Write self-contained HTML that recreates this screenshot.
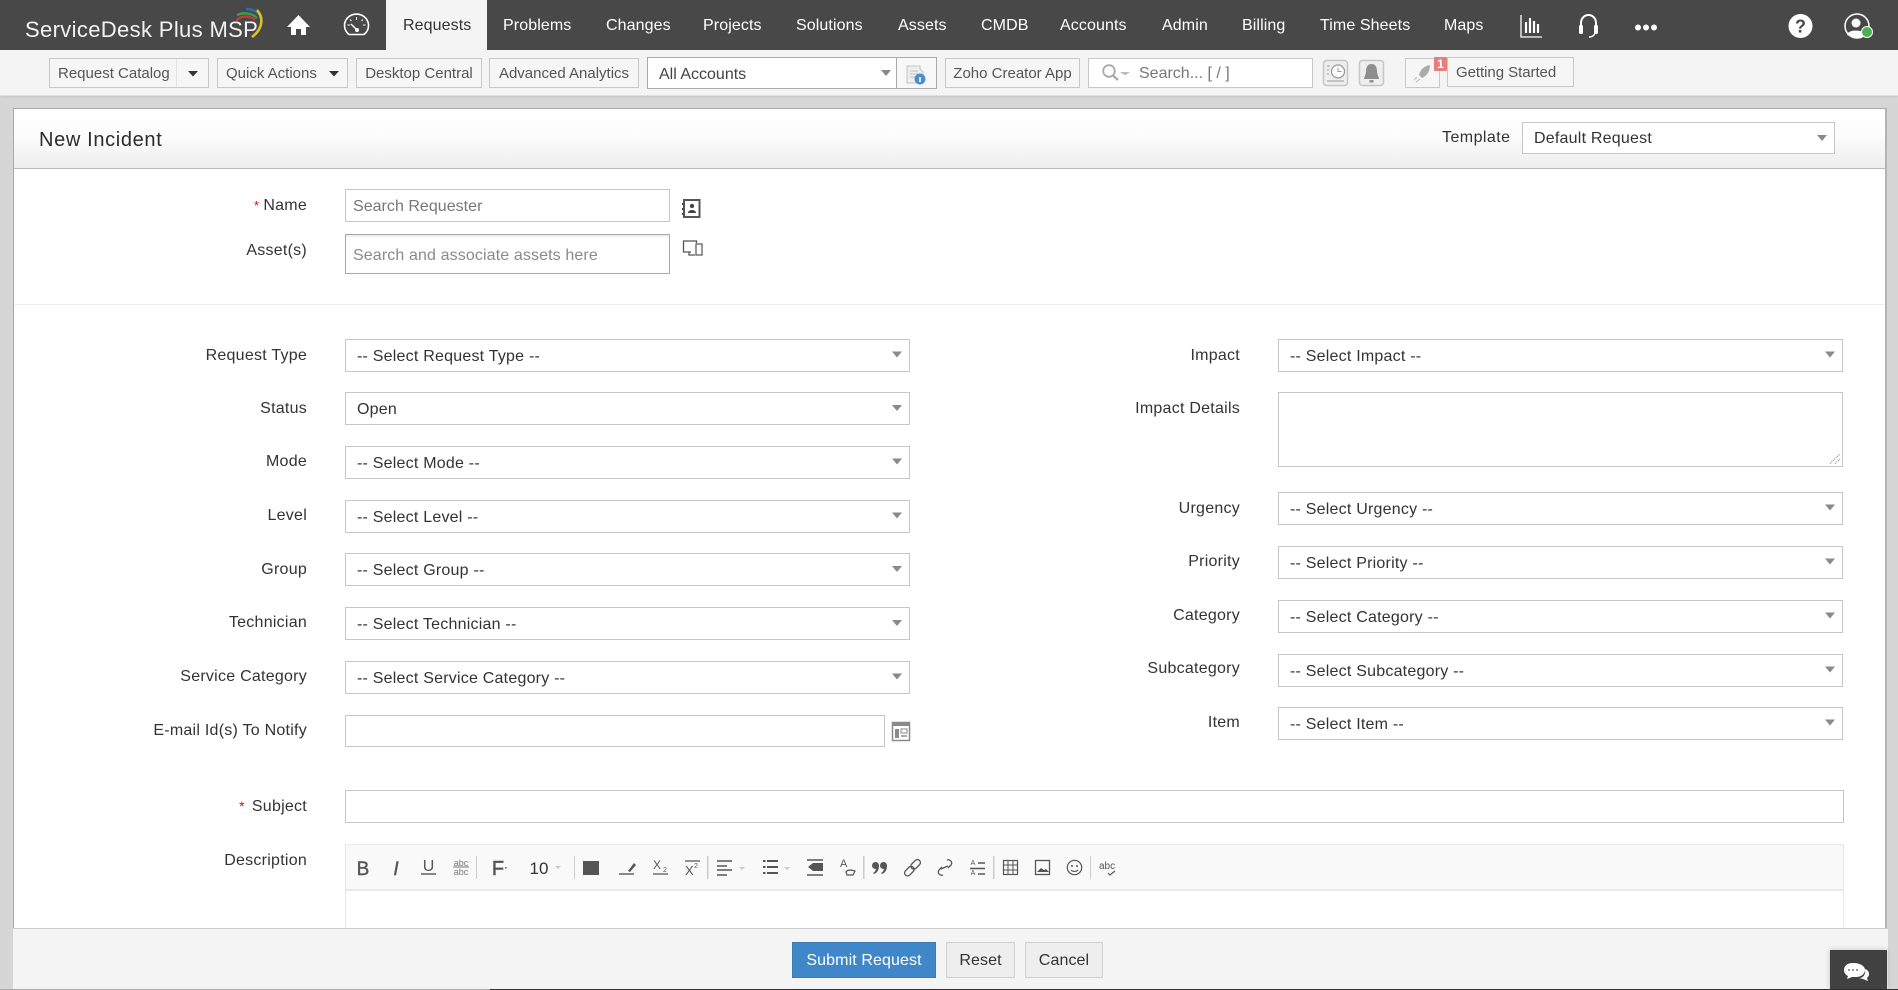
<!DOCTYPE html>
<html lang="en">
<head>
<meta charset="utf-8">
<title>New Incident</title>
<style>
html,body{margin:0;padding:0;width:1898px;height:990px;overflow:hidden;background:#d6d6d6;font-family:"Liberation Sans",Arial,sans-serif;color:#333}
div,span{position:absolute;box-sizing:border-box;white-space:nowrap}
.n{top:15px;height:22px;line-height:22px;font-size:16px;color:#fff;letter-spacing:.1px}
.b{top:58px;height:30px;border:1px solid #c8c8c8;background:#f6f6f6;color:#555;font-size:15px;line-height:30px;text-align:center}
.l{height:20px;line-height:20px;font-size:16px;color:#333;text-align:right;margin-top:1px;letter-spacing:.25px}
.L{right:1591px}
.R{right:658px}
.s{height:33px;border:1px solid #c6c6c6;background:#fff;font-size:16px;line-height:33px;padding-left:11px;color:#333;letter-spacing:.22px}
.sl{left:345px;width:565px}
.sr{left:1278px;width:565px}
.btn{top:942px;height:36px;border:1px solid #cfcfcf;background:#eee;color:#333;font-size:16px;line-height:36px;text-align:center;letter-spacing:.1px}
</style>
</head>
<body>
<!-- top bar -->
<div style="left:0;top:0;width:1898px;height:50px;background:#484848"></div>
<div style="left:386px;top:0;width:101px;height:50px;background:#f4f4f4"></div>
<div style="left:25px;top:17px;height:26px;line-height:26px;font-size:22px;letter-spacing:.35px;color:#f2f2f2">ServiceDesk Plus MSP</div>
<div class="n" style="left:403px;color:#333">Requests</div>
<div class="n" style="left:503px">Problems</div>
<div class="n" style="left:606px">Changes</div>
<div class="n" style="left:703px">Projects</div>
<div class="n" style="left:796px">Solutions</div>
<div class="n" style="left:898px">Assets</div>
<div class="n" style="left:981px">CMDB</div>
<div class="n" style="left:1060px">Accounts</div>
<div class="n" style="left:1162px">Admin</div>
<div class="n" style="left:1242px">Billing</div>
<div class="n" style="left:1320px">Time Sheets</div>
<div class="n" style="left:1444px">Maps</div>

<!-- sub bar -->
<div style="left:0;top:50px;width:1898px;height:46px;background:#f4f4f4;border-bottom:1px solid #e2e2e2;box-shadow:0 1px 2px rgba(0,0,0,.08)"></div>
<div class="b" style="left:49px;width:160px;text-align:left;padding-left:8px">Request Catalog</div>
<div style="left:176px;top:59px;width:1px;height:28px;background:#e2e2e2"></div>
<div class="b" style="left:217px;width:131px;text-align:left;padding-left:8px">Quick Actions</div>
<div class="b" style="left:356px;width:126px">Desktop Central</div>
<div class="b" style="left:489px;width:150px">Advanced Analytics</div>
<div style="left:647px;top:57px;width:250px;height:32px;border:1px solid #aaa;background:#fff;font-size:16px;line-height:33px;padding-left:11px;color:#444">All Accounts</div>
<div style="left:896px;top:57px;width:41px;height:32px;border:1px solid #aaa;background:#f8f8f8"></div>
<div class="b" style="left:945px;width:135px">Zoho Creator App</div>
<div class="b" style="left:1088px;width:225px;background:#fff;text-align:left;padding-left:50px;color:#777;font-size:16px">Search... [ / ]</div>
<div style="left:1405px;top:58px;width:35px;height:30px;border:1px solid #c8c8c8;background:#f6f6f6"></div>
<div class="b" style="left:1447px;top:57px;width:127px;color:#555;text-align:left;padding-left:8px;letter-spacing:-.05px">Getting Started</div>
<div style="left:1434px;top:57px;width:13px;height:14px;background:#e57f7f;color:#fff;font-size:12px;font-weight:bold;line-height:14px;text-align:center;border-radius:1px">1</div>

<!-- panel -->
<div style="left:13px;top:108px;width:1874px;height:830px;background:#fff;border:1px solid #aaa;border-bottom:0;border-right:2px solid #b4b4b4"></div>
<div style="left:14px;top:109px;width:1871px;height:60px;background:linear-gradient(#fff 0,#fcfcfc 45%,#eeeeee 100%);border-bottom:1px solid #bbb"></div>
<div style="left:39px;top:127px;height:26px;line-height:26px;font-size:20px;letter-spacing:.65px;color:#2c2c2c">New Incident</div>
<div class="l" style="left:1442px;top:127px;letter-spacing:.45px">Template</div>
<div class="s" style="left:1522px;top:122px;width:313px;height:32px;line-height:32px;color:#333">Default Request</div>

<!-- requester -->
<div class="l L" style="top:195px"><span style="position:static;color:#e00;font-size:13px;margin-right:4px">*</span>Name</div>
<div class="l L" style="top:240px">Asset(s)</div>
<div class="s" style="left:345px;top:189px;width:325px;color:#777;padding-left:7px;letter-spacing:.03px">Search Requester</div>
<div class="s" style="left:345px;top:234px;width:325px;height:40px;border-color:#a8a8a8;line-height:41px;color:#8a8a8a;padding-left:7px;letter-spacing:.12px;box-shadow:inset 0 3px 3px -2px rgba(0,0,0,.12)">Search and associate assets here</div>
<div style="left:14px;top:304px;width:1871px;height:1px;background:#ececec"></div>

<!-- left col -->
<div class="l L" style="top:345px">Request Type</div>
<div class="l L" style="top:398px">Status</div>
<div class="l L" style="top:451px">Mode</div>
<div class="l L" style="top:505px">Level</div>
<div class="l L" style="top:559px">Group</div>
<div class="l L" style="top:612px">Technician</div>
<div class="l L" style="top:666px">Service Category</div>
<div class="l L" style="top:720px">E-mail Id(s) To Notify</div>
<div class="l L" style="top:795px"><span style="position:static;color:#e00;font-size:14px;margin-right:7px">*</span>Subject</div>
<div class="l L" style="top:850px">Description</div>

<div class="s sl" style="top:339px">-- Select Request Type --</div>
<div class="s sl" style="top:392px">Open</div>
<div class="s sl" style="top:446px">-- Select Mode --</div>
<div class="s sl" style="top:500px">-- Select Level --</div>
<div class="s sl" style="top:553px">-- Select Group --</div>
<div class="s sl" style="top:607px">-- Select Technician --</div>
<div class="s sl" style="top:661px">-- Select Service Category --</div>
<div class="s" style="left:345px;top:715px;width:540px;height:32px"></div>
<div class="s" style="left:345px;top:790px;width:1499px"></div>

<!-- right col -->
<div class="l R" style="top:345px">Impact</div>
<div class="l R" style="top:398px">Impact Details</div>
<div class="l R" style="top:498px">Urgency</div>
<div class="l R" style="top:551px">Priority</div>
<div class="l R" style="top:605px">Category</div>
<div class="l R" style="top:658px">Subcategory</div>
<div class="l R" style="top:712px">Item</div>

<div class="s sr" style="top:339px">-- Select Impact --</div>
<div class="s sr" style="top:392px;height:75px"></div>
<div class="s sr" style="top:492px">-- Select Urgency --</div>
<div class="s sr" style="top:546px">-- Select Priority --</div>
<div class="s sr" style="top:600px">-- Select Category --</div>
<div class="s sr" style="top:654px">-- Select Subcategory --</div>
<div class="s sr" style="top:707px">-- Select Item --</div>

<!-- editor -->
<div style="left:345px;top:844px;width:1499px;height:46px;background:#f9f9f9;border:1px solid #e8e8e8"></div>
<div style="left:345px;top:890px;width:1499px;height:40px;background:#fff;border:1px solid #e8e8e8;border-bottom:0"></div>

<!-- footer -->
<div style="left:13px;top:928px;width:1875px;height:61px;background:#f4f4f4;border-top:1px solid #ccc"></div>
<div style="left:0;top:989px;width:490px;height:1px;background:#aaa"></div>
<div style="left:490px;top:989px;width:1408px;height:1px;background:#333"></div>
<div class="btn" style="left:792px;width:144px;background:#4087c9;border-color:#3a7ab5;color:#fff">Submit Request</div>
<div class="btn" style="left:946px;width:69px">Reset</div>
<div class="btn" style="left:1025px;width:78px">Cancel</div>
<div style="left:1830px;top:950px;width:57px;height:39px;background:#414141;box-shadow:0 0 5px rgba(0,0,0,.2)"></div>

<!-- icons overlay -->
<svg style="position:absolute;left:0;top:0" width="1898" height="990" viewBox="0 0 1898 990" xmlns="http://www.w3.org/2000/svg">
<g fill="none" stroke-width="2.4">
<path d="M236 21A12 10 0 0 1 255 20" stroke="#c03a38"/>
<path d="M237 15A15 11 0 0 1 257 18" stroke="#3f9a4d"/>
<path d="M246 9A17 13 0 0 1 262 18" stroke="#2c6fb2"/>
<path d="M257 10C263 17 264 28 252 37" stroke="#e0c21c" stroke-width="2.6"/>
</g>
<path d="M298.500 15L310 27H306V35H301V29H296V35H291V27H287Z" fill="#fff"/>
<g fill="none" stroke="#fff" stroke-width="1.600">
<path d="M349 34.500A12 11.500 0 1 1 364 34.500Z" stroke-linejoin="round"/>
<path d="M351 24L357 30" stroke-width="1.500"/>
<path d="M356.500 17v3M347.500 25h2.500M363 25h2.500M350 19.500l1.500 1.500M363 19.500l-1.500 1.500" stroke-width="1"/>
</g>
<circle cx="357" cy="30" r="2" fill="#fff"/>
<g stroke="#fff" fill="none">
<path d="M1521 15V37H1542" stroke-width="1.300"/>
<path d="M1526 22V33M1530 18V33M1534 21V33M1538 24V33" stroke-width="2.200"/>
<path d="M1581 29V23A7.500 8 0 0 1 1596 23V29" stroke-width="2"/>
<path d="M1595 33C1594 36 1592 37 1589 37" stroke-width="1.500"/>
</g>
<rect x="1579" y="25" width="4" height="9" rx="1.500" fill="#fff"/>
<rect x="1594" y="25" width="4" height="9" rx="1.500" fill="#fff"/>
<g fill="#fff"><circle cx="1638" cy="27.500" r="3"/><circle cx="1646" cy="27.500" r="3"/><circle cx="1654" cy="27.500" r="3"/></g>
<circle cx="1800.500" cy="26" r="12" fill="#fff"/>
<text x="1800.500" y="32.500" font-family="Liberation Sans,sans-serif" font-size="18" font-weight="bold" text-anchor="middle" fill="#484848">?</text>
<circle cx="1857" cy="26" r="12" fill="none" stroke="#fff" stroke-width="1.500"/>
<circle cx="1856" cy="23" r="4.500" fill="#fff"/>
<path d="M1847 35C1848 29 1863 29 1866 35L1858 38Z" fill="#fff"/>
<circle cx="1867" cy="32" r="5.500" fill="#4caf50" stroke="#fff"/>

<!-- toolbar -->
<g fill="#333"><path d="M188 71h10l-5 5.500zM329 71h10l-5 5.500z"/></g>
<path d="M881 70h10l-5 6z" fill="#888"/>
<path d="M907 66h13v3l3 3v11h-16z" fill="#eee" stroke="#c4c4c4" stroke-width="1"/>
<path d="M910 71h8M910 74h8M910 77h5" stroke="#c4c4c4"/>
<circle cx="920" cy="79" r="5.500" fill="#4a90d0"/>
<rect x="919.200" y="77" width="1.600" height="5" fill="#fff"/>
<circle cx="1109" cy="71" r="5.800" fill="none" stroke="#aaa" stroke-width="1.800"/>
<path d="M1113 75.500L1118 80" stroke="#aaa" stroke-width="2.200"/>
<path d="M1120 72h10l-5 3.500z" fill="#bbb"/>
<rect x="1323.500" y="60.500" width="24" height="25" rx="3" fill="#eee" stroke="#c6c6c6" stroke-width="1.500"/>
<circle cx="1338" cy="71.500" r="6.500" fill="#fff" stroke="#999" stroke-width="1.300"/>
<path d="M1338 67.500v4h3.500M1327 66h3M1327 70h2M1327 74h2M1327 81h17" stroke="#999" fill="none"/>
<rect x="1359.500" y="60.500" width="24" height="25" rx="3" fill="#eee" stroke="#c6c6c6" stroke-width="1.500"/>
<path d="M1371.500 64C1376 64 1377 68 1377 71C1377 75 1379 77 1379 79H1364C1364 77 1366 75 1366 71C1366 68 1367 64 1371.500 64Z" fill="#8e8e8e"/>
<rect x="1369.500" y="80" width="4" height="2.500" fill="#8e8e8e"/>
<path d="M1430 65C1424 66 1420 70 1419 75L1422 78C1427 76 1430 71 1430 65Z" fill="#aaa"/>
<path d="M1417 77L1414 80M1420 79L1416 82" stroke="#bbb"/>

<!-- select arrows -->
<g fill="#8a8a8a">
<path d="M892 351.500h10l-5 6zM892 405h10l-5 6zM892 458.500h10l-5 6zM892 512.500h10l-5 6zM892 566h10l-5 6zM892 620h10l-5 6zM892 673.500h10l-5 6z"/>
<path d="M1825 351.500h10l-5 6zM1825 504.500h10l-5 6zM1825 558.500h10l-5 6zM1825 612.500h10l-5 6zM1825 666.500h10l-5 6zM1825 719.500h10l-5 6z"/>
<path d="M1817 135h10l-5 6z"/>
</g>
<path d="M1830 463.500L1840 454M1835 463.500L1840 459" stroke="#777" stroke-dasharray="1 1" fill="none"/>

<!-- name / asset / email icons -->
<rect x="684" y="200" width="15.500" height="17" fill="#fff" stroke="#555" stroke-width="2"/>
<circle cx="692" cy="206" r="2.200" fill="#444"/><path d="M688 213c0-4 8-4 8 0z" fill="#444"/>
<path d="M682.500 203v2M682.500 208v2M682.500 213v2" stroke="#444"/>
<path d="M691 252h-7.500v-11h13v2M689 252v3h6" fill="none" stroke="#555" stroke-width="1.300"/>
<rect x="696" y="244" width="6" height="11" fill="#fff" stroke="#555" stroke-width="1.200"/>
<rect x="892.500" y="722.500" width="17" height="18" fill="#fff" stroke="#8a8a8a" stroke-width="1.500"/>
<rect x="893" y="723" width="16" height="3" fill="#8a8a8a"/>
<rect x="895" y="729" width="4" height="9" fill="#8a8a8a"/>
<rect x="901" y="729" width="6" height="4" fill="none" stroke="#8a8a8a"/>
<path d="M901 736h6" stroke="#8a8a8a" stroke-width="1.500"/>

<!-- editor toolbar -->
<g font-family="Liberation Sans,sans-serif" fill="#555">
<text x="363" y="875" font-size="19" text-anchor="middle" stroke="#555" stroke-width=".4">B</text>
<text x="396" y="875" font-size="19" font-style="italic" text-anchor="middle" stroke="#555" stroke-width=".4">I</text>
<text x="428.500" y="871" font-size="16" text-anchor="middle">U</text>
<text x="461" y="866" font-size="9" text-anchor="middle" fill="#777">abc</text>
<text x="461" y="875" font-size="9" text-anchor="middle" fill="#777">abc</text>
<text x="498" y="875" font-size="20" text-anchor="middle" stroke="#555" stroke-width=".5">F</text>
<rect x="505" y="867" width="1.500" height="1.500"/>
<text x="539" y="874" font-size="17" text-anchor="middle" fill="#333">10</text>
<text x="653" y="869" font-size="12">X</text>
<text x="663" y="872" font-size="7">2</text>
<text x="685" y="875" font-size="13">X</text>
<text x="694" y="868" font-size="7">2</text>
<text x="840" y="867" font-size="11">A</text>
<text x="973" y="865" font-size="7" text-anchor="middle">A</text>
<text x="973" y="875" font-size="7" text-anchor="middle">A</text>
<text x="1099" y="869" font-size="10">abc</text>
</g>
<g fill="none" stroke="#555">
<path d="M421 874h15" stroke-width="1.400"/>
<path d="M453 867h16" stroke-width="1" stroke="#777"/>
<path d="M653 874h15M685 861h15" stroke-width="1.300"/>
<path d="M717 861h15M717 866h10M717 870h15M717 875h10" stroke-width="1.500"/>
<path d="M767 861h11M767 867h11M767 873h11M763 861h2.500M763 867h2.500M763 873h2.500" stroke-width="2"/>
<path d="M807 860h16M807 875h16" stroke-width="1.600"/>
<path d="M846 872c1-2 3-2 5-2l4 1-2 4h-6z" stroke-width="1.200"/>
<g stroke-width="1.300">
<rect x="-3" y="-6" width="6" height="11" rx="3" transform="translate(909 871.500) rotate(45)"/>
<rect x="-3" y="-5" width="6" height="11" rx="3" transform="translate(916 864) rotate(45)"/>
<path d="M947 860c3-1 6 2 4 5l-3 3M943 875c-3 1-6-2-4-5l3-3M941 869l7-3" />
</g>
<path d="M978 863h7M978 874h7M970 868.500h15" stroke-width="1.500"/>
<rect x="1003.500" y="860.500" width="14" height="14" stroke-width="1.200"/>
<path d="M1008 861v13M1013 861v13M1004 865h13M1004 870h13" stroke-width="1"/>
<rect x="1035.500" y="860.500" width="14" height="14" stroke-width="1.300"/>
<circle cx="1074.500" cy="867.500" r="7.200" stroke-width="1.200"/>
<path d="M1071 870c2 2 5 2 7 0" stroke-width="1.100"/>
<path d="M1108 873l2 2 5-4" stroke-width="1.200"/>
</g>
<g fill="#555">
<rect x="583" y="861" width="16" height="14"/>
<path d="M628 871l6-8 2 2-6 7z"/>
<rect x="619" y="873" width="15" height="2" fill="#888"/>
<path d="M808 867l5-4v8zM813 863h10v8h-10z"/>
<path d="M1037 872l4-4 3 2 2-1 3 3z"/>
<circle cx="1072" cy="866" r="1"/><circle cx="1077" cy="866" r="1"/>
<circle cx="875.500" cy="865.500" r="3.500"/><path d="M879 866c0 4-2 7-5 8l-1-1c2-1 3-3 3-5z"/>
<circle cx="883.500" cy="865.500" r="3.500"/><path d="M887 866c0 4-2 7-5 8l-1-1c2-1 3-3 3-5z"/>
</g>
<g fill="#ccc">
<path d="M555 866h6l-3 3zM739 867h6l-3 3zM784 867h6l-3 3z"/>
<rect x="476" y="856" width="1" height="23"/><rect x="574" y="856" width="1" height="23"/>
<rect x="707" y="856" width="1.500" height="23"/><rect x="863" y="856" width="1.500" height="23"/>
<rect x="993" y="856" width="1.500" height="23"/><rect x="1090" y="856" width="1" height="23"/>
</g>
<!-- chat -->
<path d="M1853 963c-6 0-9 3-9 7 0 3 2 5 4 6l-1 3 5-2h4c5 0 9-3 9-7s-5-7-12-7z" fill="#fff"/>
<path d="M1865 969c3 1 4 3 4 5 0 2-1 3-2 4l1 3-5-2-4-1c4 0 7-3 6-9z" fill="#fff"/>
<g fill="#777"><circle cx="1849" cy="970" r="1"/><circle cx="1853" cy="970" r="1"/><circle cx="1857" cy="970" r="1"/></g>
</svg>
</body>
</html>
